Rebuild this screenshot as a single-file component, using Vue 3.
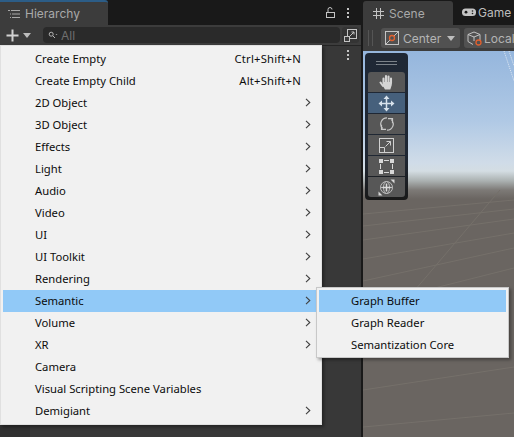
<script setup>
const items = [
  { label: 'Create Empty', shortcut: 'Ctrl+Shift+N' },
  { label: 'Create Empty Child', shortcut: 'Alt+Shift+N' },
  { label: '2D Object', sub: true },
  { label: '3D Object', sub: true },
  { label: 'Effects', sub: true },
  { label: 'Light', sub: true },
  { label: 'Audio', sub: true },
  { label: 'Video', sub: true },
  { label: 'UI', sub: true },
  { label: 'UI Toolkit', sub: true },
  { label: 'Rendering', sub: true },
  { label: 'Semantic', sub: true, active: true },
  { label: 'Volume', sub: true },
  { label: 'XR', sub: true },
  { label: 'Camera' },
  { label: 'Visual Scripting Scene Variables' },
  { label: 'Demigiant', sub: true }
];

const subItems = [
  { label: 'Graph Buffer', active: true },
  { label: 'Graph Reader' },
  { label: 'Semantization Core' }
];
</script>

<template>
  <div class="editor">
    <section class="hierarchy">
      <div class="tabbar">
        <div class="tab">
          <svg width="12" height="10" viewBox="0 0 12 10" fill="none" stroke="#a8a8a8">
            <path d="M0 1.500h2M3 1.500h9M2 5h1M4 5h8M2 8.500h1M4 8.500h8" />
          </svg>
          <span>Hierarchy</span>
        </div>
        <div class="tab-actions">
          <svg width="9" height="11" viewBox="0 0 9 11" fill="none" stroke="#c4c4c4">
            <rect x="0.500" y="5.500" width="8" height="5" />
            <path d="M2 5V2.500a2 2 0 0 1 4 0" />
          </svg>
          <svg width="4" height="12" viewBox="0 0 4 12" fill="#c4c4c4">
            <rect x="1" y="1" width="2" height="2" />
            <rect x="1" y="5" width="2" height="2" />
            <rect x="1" y="9" width="2" height="2" />
          </svg>
        </div>
      </div>
      <div class="toolbar">
        <svg class="plus" width="13" height="13" viewBox="0 0 13 13" fill="#d2d2d2">
          <rect x="5.500" y="0.500" width="2" height="12" />
          <rect x="0.500" y="5.500" width="12" height="2" />
        </svg>
        <span class="caret"></span>
        <div class="search">
          <svg width="10" height="9" viewBox="0 0 10 9" fill="none" stroke="#b5b5b5">
            <circle cx="3.200" cy="3.200" r="2" />
            <path d="M4.800 4.800L7 7" />
            <path d="M7.500 3h2l-1 1z" fill="#b5b5b5" stroke="none" />
          </svg>
          <span>All</span>
        </div>
        <div class="expand">
          <svg width="13" height="13" viewBox="0 0 13 13" fill="none" stroke="#c4c4c4">
            <rect x="3.500" y="0.500" width="9" height="9" />
            <rect x="0.500" y="7.500" width="5" height="5" fill="#3c3c3c" />
            <path d="M6 7l4-4M7.500 3H10v2.500" />
          </svg>
        </div>
      </div>
      <div class="tree">
        <svg class="kebab" width="4" height="12" viewBox="0 0 4 12" fill="#c4c4c4">
          <rect x="1" y="1" width="2" height="2" />
          <rect x="1" y="5" width="2" height="2" />
          <rect x="1" y="9" width="2" height="2" />
        </svg>
      </div>
    </section>

    <section class="scene">
      <div class="scene-tabs">
        <div class="scene-tab active">
          <svg width="11" height="11" viewBox="0 0 11 11" fill="none" stroke="#c4c4c4">
            <path d="M3.500 0v11M7.500 0v11M0 3.500h11M0 7.500h11" />
          </svg>
          <span>Scene</span>
        </div>
        <div class="scene-tab">
          <svg width="14" height="9" viewBox="0 0 14 9" fill="#c4c4c4">
            <rect x="0" y="0.500" width="14" height="7.500" rx="3.500" />
            <circle cx="4" cy="4.200" r="1.400" fill="#191919" />
            <circle cx="10.500" cy="3" r="0.800" fill="#191919" />
            <circle cx="10.500" cy="5.500" r="0.800" fill="#191919" />
          </svg>
          <span>Game</span>
        </div>
      </div>
      <div class="scene-toolbar">
        <span class="grip"></span>
        <div class="tool-btn center">
          <svg width="14" height="14" viewBox="0 0 14 14" fill="none">
            <rect x="0.500" y="0.500" width="13" height="13" stroke="#c4c4c4" />
            <path d="M1 13L13 1" stroke="#c4c4c4" />
            <circle cx="7" cy="7" r="2.500" fill="#515151" stroke="#e2612f" stroke-width="1.300" />
          </svg>
          <span>Center</span>
          <span class="caret small"></span>
        </div>
        <div class="tool-btn local">
          <svg width="15" height="15" viewBox="0 0 15 15" fill="none" stroke="#c4c4c4">
            <path d="M7 1l6 2.500v6M7 1L1 3.500v7l5 3M1 3.500l6 2.500 6-2.500M7 6v4" />
            <circle cx="11.500" cy="11.500" r="2.500" fill="#515151" stroke="#e2612f" stroke-width="1.300" />
          </svg>
          <span>Local</span>
        </div>
      </div>
      <div class="viewport">
        <svg class="grid" width="151" height="386" viewBox="0 0 151 386" fill="none" stroke="#75706a">
          <path d="M0 163L151 149M0 175L151 158M0 189L151 168M0 208L151 182M0 230L151 197M0 255L151 217M0 339L151 316M0 376L151 362" />
          <path d="M52 239L137 139" />
          <path d="M141 0L151 30M146 0L151 15" stroke="#dfe8f2" stroke-dasharray="1 1" />
        </svg>
        <div class="tools">
          <div class="tools-head"></div>
          <div class="tool">
            <svg width="16" height="17" viewBox="0 0 16 17" fill="#d4d4d4" stroke="#d4d4d4" stroke-linecap="round">
              <path d="M4.500 9V4.500M7 8V2M9.500 8V2.500M12 9V4.500" stroke-width="2.100" fill="none" />
              <path d="M1.500 8.500L4 12" stroke-width="2.100" fill="none" />
              <path d="M4 8h8.800v3l-1.500 4.500H6L4 12z" stroke="none" />
            </svg>
          </div>
          <div class="tool on">
            <svg width="17" height="17" viewBox="0 0 17 17" fill="none" stroke="#d8e2ec" stroke-width="1.500">
              <path d="M8.500 3v11M3 8.500h11" />
              <path d="M8.500 0.500L11.500 4h-6zM8.500 16.500L5.500 13h6zM0.500 8.500L4 5.500v6zM16.500 8.500L13 11.500v-6z" fill="#d8e2ec" stroke="none" />
            </svg>
          </div>
          <div class="tool">
            <svg width="16" height="16" viewBox="0 0 16 16" fill="none" stroke="#c8c8c8" stroke-width="1.200">
              <path d="M8 1.800A6.200 6.200 0 0 0 3.600 12.400M2.500 8.800v4.500H7" />
              <path d="M8 14.200A6.200 6.200 0 0 0 12.400 3.600M13.500 7.200V2.700H9" />
            </svg>
          </div>
          <div class="tool">
            <svg width="15" height="15" viewBox="0 0 15 15" fill="none" stroke="#d0d0d0">
              <rect x="0.500" y="0.500" width="14" height="14" />
              <path d="M0.500 9.500h5v5M6.500 8.500l5-5M7.500 3.500h4v4" />
            </svg>
          </div>
          <div class="tool">
            <svg width="15" height="15" viewBox="0 0 15 15" fill="#d8d8d8">
              <rect x="0" y="0" width="4" height="4" />
              <rect x="11" y="0" width="4" height="4" />
              <rect x="0" y="11" width="4" height="4" />
              <rect x="11" y="11" width="4" height="4" />
              <path d="M5 1.500h5M5 13.500h5M1.500 5v5M13.500 5v5" fill="none" stroke="#d8d8d8" />
            </svg>
          </div>
          <div class="tool">
            <svg width="17" height="17" viewBox="0 0 17 17" fill="none" stroke="#bdbdbd">
              <circle cx="8.500" cy="8.500" r="6" />
              <ellipse cx="8.500" cy="8.500" rx="3" ry="6" />
              <path d="M2.500 8.500h12" />
              <path d="M8.500 4.500v8M4.500 8.500h8" stroke="#dcdcdc" stroke-width="1.500" />
              <path d="M0.500 16.500v-4l4 4zM16.500 0.500v4l-4-4z" fill="#d8d8d8" stroke="none" />
            </svg>
          </div>
        </div>
      </div>
    </section>

    <ul class="menu main-menu">
      <li v-for="item in items" :key="item.label" :class="['row', { active: item.active }]">
        <span class="label">{{ item.label }}</span>
        <span v-if="item.shortcut" class="shortcut">{{ item.shortcut }}</span>
        <svg v-if="item.sub" class="chevron" width="6" height="9" viewBox="0 0 6 9" fill="none" stroke="#404040" stroke-width="1.100">
          <path d="M1 0.800L4.800 4.500L1 8.200" />
        </svg>
      </li>
    </ul>

    <ul class="menu sub-menu">
      <li v-for="item in subItems" :key="item.label" :class="['row', { active: item.active }]">
        <span class="label">{{ item.label }}</span>
      </li>
    </ul>
  </div>
</template>

<style>
html, body {
  margin: 0;
  background: #191919;
}
</style>

<style scoped>
.editor {
  position: relative;
  display: grid;
  grid-template-columns: 361px 153px;
  width: 514px;
  height: 437px;
  overflow: hidden;
  background: #191919;
  font-family: Inter, "Noto Sans", sans-serif;
  font-size: 12px;
}

svg {
  flex: none;
}

.hierarchy {
  display: flex;
  flex-direction: column;
  min-width: 0;
}

.tabbar {
  display: flex;
  justify-content: space-between;
  height: 25px;
  flex: none;
}

.tab {
  display: flex;
  align-items: center;
  gap: 5px;
  width: 108px;
  padding-left: 8px;
  box-sizing: border-box;
  border-top: 2px solid #2c5d87;
  border-radius: 0 3px 0 0;
  background: #3c3c3c;
  color: #a9a9a9;
}

.tab-actions {
  display: flex;
  align-items: center;
  gap: 11px;
  padding-right: 11px;
}

.toolbar {
  display: flex;
  align-items: center;
  height: 20px;
  flex: none;
  padding-left: 6px;
  background: #3c3c3c;
}

.plus {
  margin-right: 4px;
}

.caret {
  flex: none;
  width: 0;
  height: 0;
  border-left: 4px solid transparent;
  border-right: 4px solid transparent;
  border-top: 5px solid #bdbdbd;
}

.caret.small {
  margin-left: 2px;
}

.search {
  display: flex;
  flex: 1;
  align-items: center;
  gap: 3px;
  height: 16px;
  margin-left: 12px;
  padding-left: 5px;
  border-radius: 4px;
  background: #2a2a2a;
  color: #6f6f6f;
}

.expand {
  display: flex;
  align-items: center;
  justify-content: center;
  width: 17px;
  height: 16px;
  margin-left: 2px;
  margin-right: 2px;
  border-radius: 3px;
  background: #343434;
}

.tree {
  flex: 1;
  display: flex;
  justify-content: flex-end;
  padding: 3px 11px 0 0;
  border-top: 1px solid #242424;
  background: linear-gradient(90deg, #303030 30px, #383838 30px);
}

.kebab {
  display: block;
}

.scene {
  display: flex;
  flex-direction: column;
  min-width: 0;
  padding-left: 2px;
}

.scene-tabs {
  display: flex;
  height: 25px;
  flex: none;
}

.scene-tab {
  display: flex;
  align-items: center;
  gap: 5px;
  padding-left: 10px;
  color: #bdbdbd;
}

.scene-tab.active {
  width: 90px;
  margin-top: 1px;
  box-sizing: border-box;
  border-radius: 3px 3px 0 0;
  background: #3c3c3c;
  color: #a9a9a9;
}

.scene-tab + .scene-tab {
  padding-left: 9px;
  gap: 2px;
}

.scene-toolbar {
  display: flex;
  align-items: center;
  gap: 4px;
  height: 26px;
  flex: none;
  background: #3c3c3c;
}

.grip {
  width: 3px;
  height: 16px;
  margin: 0 4px 0 5px;
  border-left: 1px solid #555;
  border-right: 1px solid #555;
}

.tool-btn {
  display: flex;
  align-items: center;
  gap: 4px;
  height: 20px;
  padding: 0 3px 0 4px;
  box-sizing: border-box;
  border-radius: 3px;
  background: #515151;
  color: #b4b4b4;
}

.tool-btn.center {
  width: 79px;
  flex: none;
}

.tool-btn.local {
  flex: 1;
  min-width: 0;
  gap: 2px;
  padding: 0 0 0 3px;
  border-radius: 3px 0 0 3px;
  white-space: nowrap;
}

.viewport {
  position: relative;
  flex: 1;
  overflow: hidden;
  background: linear-gradient(#95b6dd 0, #b0c9e5 70px, #d0dce8 112px, #d4dde3 120px, #aab0b0 130px, #7d7a77 139px, #6a6561 148px);
}

.grid {
  position: absolute;
  left: 0;
  top: 0;
}

.tools {
  position: absolute;
  left: 2px;
  top: 2px;
  display: flex;
  flex-direction: column;
  gap: 1px;
  width: 43px;
  padding: 0 3px 3px;
  box-sizing: border-box;
  border-radius: 4px;
  background: linear-gradient(#1f2835, #1f2733 70%, #191919);
}

.tools-head {
  height: 18px;
  margin: 0 8px;
  background: linear-gradient(#7b8289, #7b8289) 0 8px / 100% 1px no-repeat,
    linear-gradient(#7b8289, #7b8289) 0 11px / 100% 1px no-repeat;
}

.tool {
  display: flex;
  align-items: center;
  justify-content: center;
  height: 20px;
  background: #575757;
}

.tool:nth-child(2) {
  border-radius: 3px 3px 0 0;
}

.tool:last-child {
  border-radius: 0 0 3px 3px;
}

.tool.on {
  background: #46607c;
}

.menu {
  position: absolute;
  margin: 0;
  padding: 2px;
  box-sizing: border-box;
  list-style: none;
  background: #f1f1f1;
  color: #0c0c0c;
  font-family: "Noto Sans", "Open Sans", sans-serif;
  font-size: 11.25px;
  box-shadow: 2px 2px 3px rgba(0, 0, 0, 0.35);
}

.main-menu {
  left: 0;
  top: 45px;
  width: 322px;
  height: 380px;
  border: 1px solid #e0e0e0;
}

.sub-menu {
  left: 316px;
  top: 287px;
  width: 193px;
  height: 71px;
  border: 1px solid #c8c8c8;
}

.row {
  display: flex;
  align-items: center;
  height: 22px;
  padding: 0 0 2px 32px;
  box-sizing: border-box;
  white-space: nowrap;
}

.row.active {
  background: #91c9f7;
}

.label {
  flex: 1;
}

.shortcut {
  margin-right: 18px;
  letter-spacing: 0.2px;
}

.chevron {
  margin-right: 8px;
}
</style>
